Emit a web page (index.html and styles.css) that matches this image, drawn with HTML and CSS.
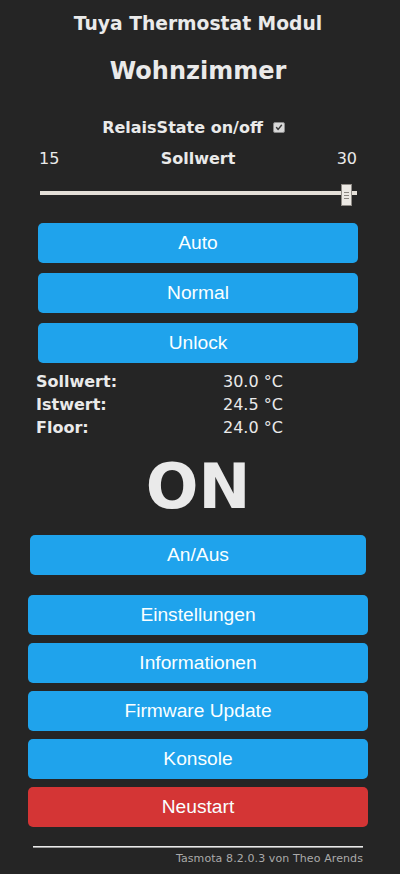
FILE: index.html
```html
<!DOCTYPE html>
<html lang="de">
<head>
<meta charset="utf-8">
<title>Tuya Thermostat Modul - Wohnzimmer</title>
<link rel="stylesheet" href="styles.css">
</head>
<body>
<div class="page">
  <h3 class="module">Tuya Thermostat Modul</h3>
  <h2 class="device">Wohnzimmer</h2>

  <div class="relais">
    <span class="relais-label">RelaisState on/off</span>
    <span class="check" aria-checked="true" role="checkbox">
      <svg viewBox="0 0 12 11" width="12" height="11"><path d="M3 5.6 L5 7.8 L9 2.8" fill="none" stroke="#3a3a3a" stroke-width="1.8" stroke-linecap="round" stroke-linejoin="round"/></svg>
    </span>
  </div>

  <div class="range-labels">
    <span class="rmin">15</span>
    <span class="rname">Sollwert</span>
    <span class="rmax">30</span>
  </div>

  <div class="slider" role="slider" aria-valuemin="15" aria-valuemax="30" aria-valuenow="30">
    <div class="track"></div>
    <div class="thumb"><i></i><i></i><i></i></div>
  </div>

  <div class="btn-group mode">
    <button class="btn">Auto</button>
    <button class="btn">Normal</button>
    <button class="btn">Unlock</button>
  </div>

  <div class="values">
    <span class="vlabel">Sollwert:</span><span class="vval">30.0 °C</span>
    <span class="vlabel">Istwert:</span><span class="vval">24.5 °C</span>
    <span class="vlabel">Floor:</span><span class="vval">24.0 °C</span>
  </div>

  <div class="state">ON</div>

  <div class="toggle-wrap">
    <button class="btn">An/Aus</button>
  </div>

  <div class="btn-group menu">
    <button class="btn">Einstellungen</button>
    <button class="btn">Informationen</button>
    <button class="btn">Firmware Update</button>
    <button class="btn">Konsole</button>
    <button class="btn btn-red">Neustart</button>
  </div>

  <div class="footer">
    <hr class="rule">
    <a class="credit" href="#">Tasmota 8.2.0.3 von Theo Arends</a>
  </div>
</div>
</body>
</html>
```
FILE: styles.css
```css
html, body {
  margin: 0;
  padding: 0;
  background: #252525;
}
body {
  font-family: "DejaVu Sans", Verdana, sans-serif;
  color: #eaeaea;
}
.page {
  width: 340px;
  margin-left: 28px;
  padding-top: 12px;
  text-align: center;
}
.module {
  margin: 0;
  font-size: 18.72px;
  line-height: 24px;
  font-weight: bold;
}
.device {
  margin: 20px 0 0;
  font-size: 24px;
  line-height: 30px;
  font-weight: bold;
}
.relais {
  margin-top: 32px;
  display: flex;
  justify-content: center;
  align-items: center;
  gap: 10px;
  padding-right: 9px;
  font-size: 16px;
  line-height: 20px;
  font-weight: bold;
}
.check {
  display: inline-flex;
  width: 10px;
  height: 9px;
  border: 1px solid #8c8c8c;
  border-radius: 2px;
  background: #d8d8d8;
  position: relative;
  top: -1px;
}
.check svg {
  width: 10px;
  height: 9px;
}
.range-labels {
  margin: 11px 0 0 11px;
  width: 318px;
  display: flex;
  justify-content: space-between;
  font-size: 16px;
  line-height: 20px;
}
.rname {
  font-weight: bold;
}
.slider {
  position: relative;
  margin: 15px 0 0 12px;
  width: 317px;
  height: 22px;
}
.track {
  position: absolute;
  left: 0;
  right: 0;
  top: 7px;
  height: 4px;
  background: #e4dfd8;
}
.thumb {
  position: absolute;
  left: 301px;
  top: 0;
  width: 9px;
  height: 20px;
  border: 1px solid #8f8b86;
  background: #ece9e4;
  display: flex;
  flex-direction: column;
  justify-content: center;
  align-items: center;
  gap: 2px;
}
.thumb i {
  display: block;
  width: 5px;
  height: 1px;
  background: #8a8680;
}
.btn-group {
  display: flex;
  flex-direction: column;
}
.mode {
  margin: 17px 10px 0;
  gap: 10px;
}
.btn {
  display: block;
  width: 100%;
  height: 40px;
  border: 0;
  border-radius: 5px;
  padding: 0;
  background: #1fa3ec;
  color: #faffff;
  font-family: "Liberation Sans", Arial, sans-serif;
  font-size: 19.2px;
  line-height: 40px;
  text-align: center;
}
.btn-red {
  background: #d43535;
}
.values {
  margin-top: 7px;
  display: grid;
  grid-template-columns: 187px 1fr;
  padding-left: 8px;
  text-align: left;
  font-size: 16px;
  line-height: 23px;
}
.vlabel {
  font-weight: bold;
}
.state {
  margin-top: 12.5px;
  font-size: 62px;
  line-height: 70px;
  font-weight: bold;
}
.toggle-wrap {
  margin: 13.5px 2px 0;
}
.menu {
  margin-top: 20px;
  gap: 8px;
}
.footer {
  margin: 19px 5px 0;
  text-align: right;
  font-size: 11px;
  line-height: 14px;
}
.rule {
  margin: 0 0 4px;
  height: 0;
  border: 0;
  border-top: 1px solid #eaeaea;
  border-bottom: 1px solid #9a9a9a;
}
.credit {
  color: #aaa;
  text-decoration: none;
  letter-spacing: 0.1px;
}
```
